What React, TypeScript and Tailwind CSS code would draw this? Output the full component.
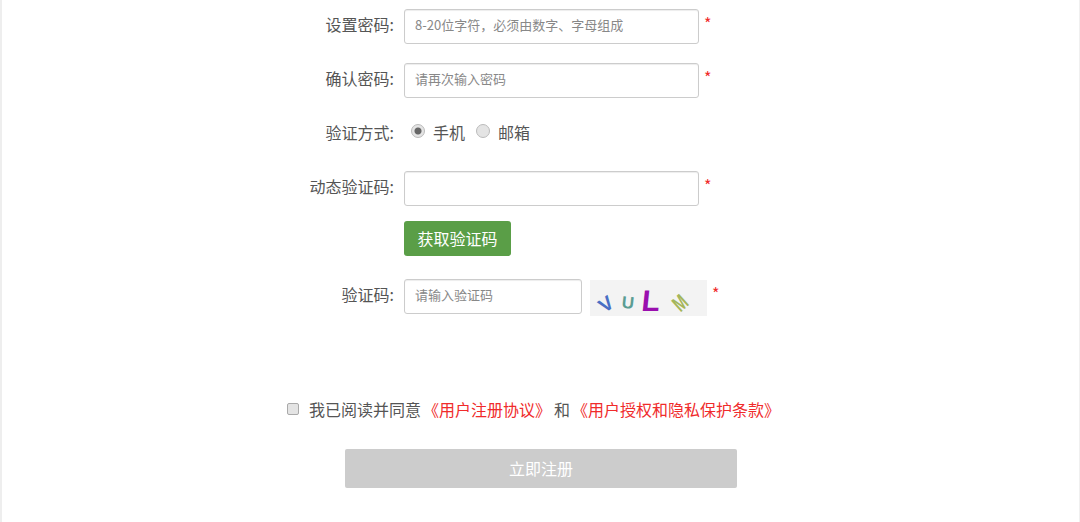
const labelClass = "w-[145px] pr-[10px] text-right text-[16px] leading-[30px] text-[#555]";
const inputClass =
  "h-[35px] rounded-[3px] border border-[#ccc] bg-white px-[10px] pb-[5px] text-[13px] text-[#555] shadow-[inset_0_1px_1px_rgba(0,0,0,0.075)] outline-none placeholder:text-[#888]";
const radioClass =
  "mr-[8px] size-[14px] -translate-y-[1px] appearance-none rounded-full border border-[#bbb] bg-[#e4e4e4] checked:bg-[radial-gradient(circle,#666_0,#666_3px,#e4e4e4_4px)]";

function Star({ className = "ml-[5px]" }: { className?: string }) {
  return <span className={`${className} -mt-[3px] text-[16px] leading-[35px] text-[#f02b2b]`}>*</span>;
}

function Field({ label, placeholder }: { label: string; placeholder?: string }) {
  return (
    <div className="flex h-[35px] items-start">
      <label className={labelClass}>{label}:</label>
      <input className={`${inputClass} w-[295px]`} placeholder={placeholder} />
      <Star />
    </div>
  );
}

function Captcha() {
  return (
    <svg width="117" height="36" viewBox="0 0 117 36" className="mt-[1px] ml-[8px] bg-[#f3f3f3]">
      <g fontFamily="'Liberation Sans', sans-serif" fontWeight="700" textAnchor="middle" dominantBaseline="central">
        <text fontSize="20" fill="#4a6fc4" transform="translate(16 24) rotate(-35)">V</text>
        <text fontSize="17" fill="#5b9d93" transform="translate(38 23) rotate(6)">U</text>
        <text fontSize="30" fill="#9a0fae" transform="translate(61 21) skewX(-6)">L</text>
        <text fontSize="20" fill="#a5b65a" transform="translate(90 23) rotate(-42) scale(0.75 1.1)">M</text>
      </g>
    </svg>
  );
}

export default function App() {
  return (
    <div
      className="h-[522px] overflow-hidden border-r border-l-2 border-r-[#f0f0f0] border-l-[#eee] bg-white pt-[9px] pl-[257px]"
      style={{ fontFamily: '"Noto Sans CJK SC", "Liberation Sans", sans-serif' }}
    >
      <div className="flex flex-col gap-[19px]">
        <Field label="设置密码" placeholder="8-20位字符，必须由数字、字母组成" />
        <Field label="确认密码" placeholder="请再次输入密码" />
        <div className="flex h-[35px] items-start">
          <span className={labelClass}>验证方式:</span>
          <label className="ml-[7px] flex h-[30px] items-center text-[16px] text-[#555]">
            <input type="radio" name="verify" defaultChecked className={radioClass} />
            手机
          </label>
          <label className="ml-[11px] flex h-[30px] items-center text-[16px] text-[#555]">
            <input type="radio" name="verify" className={radioClass} />
            邮箱
          </label>
        </div>
        <div className="flex flex-col gap-[15px]">
          <Field label="动态验证码" />
          <button className="ml-[145px] h-[35px] w-[107px] rounded-[3px] bg-[#5a9e47] pb-[1px] text-[16px] text-white">获取验证码</button>
        </div>
        <div className="mt-[4px] flex h-[37px] items-start">
          <label className={labelClass}>验证码:</label>
          <input className={`${inputClass} w-[178px]`} placeholder="请输入验证码" />
          <Captcha />
          <Star />
        </div>
      </div>
      <div className="mt-[83px] ml-[28px] flex h-[20px] items-center text-[16px] whitespace-nowrap text-[#555]">
        <input
          type="checkbox"
          className="mr-[10px] size-[12px] appearance-none rounded-[2px] border border-[#aaa] bg-[#e4e4e4]"
        />
        <span>我已阅读并同意</span>
        <a className="ml-[2px] text-[#f02b2b]">《用户注册协议》</a>
        <span className="ml-[3px]">和</span>
        <a className="ml-[2px] text-[#f02b2b]">《用户授权和隐私保护条款》</a>
      </div>
      <button className="mt-[30px] ml-[86px] block h-[39px] w-[392px] rounded-[2px] bg-[#ccc] pb-[1px] text-[16px] text-white">立即注册</button>
    </div>
  );
}
